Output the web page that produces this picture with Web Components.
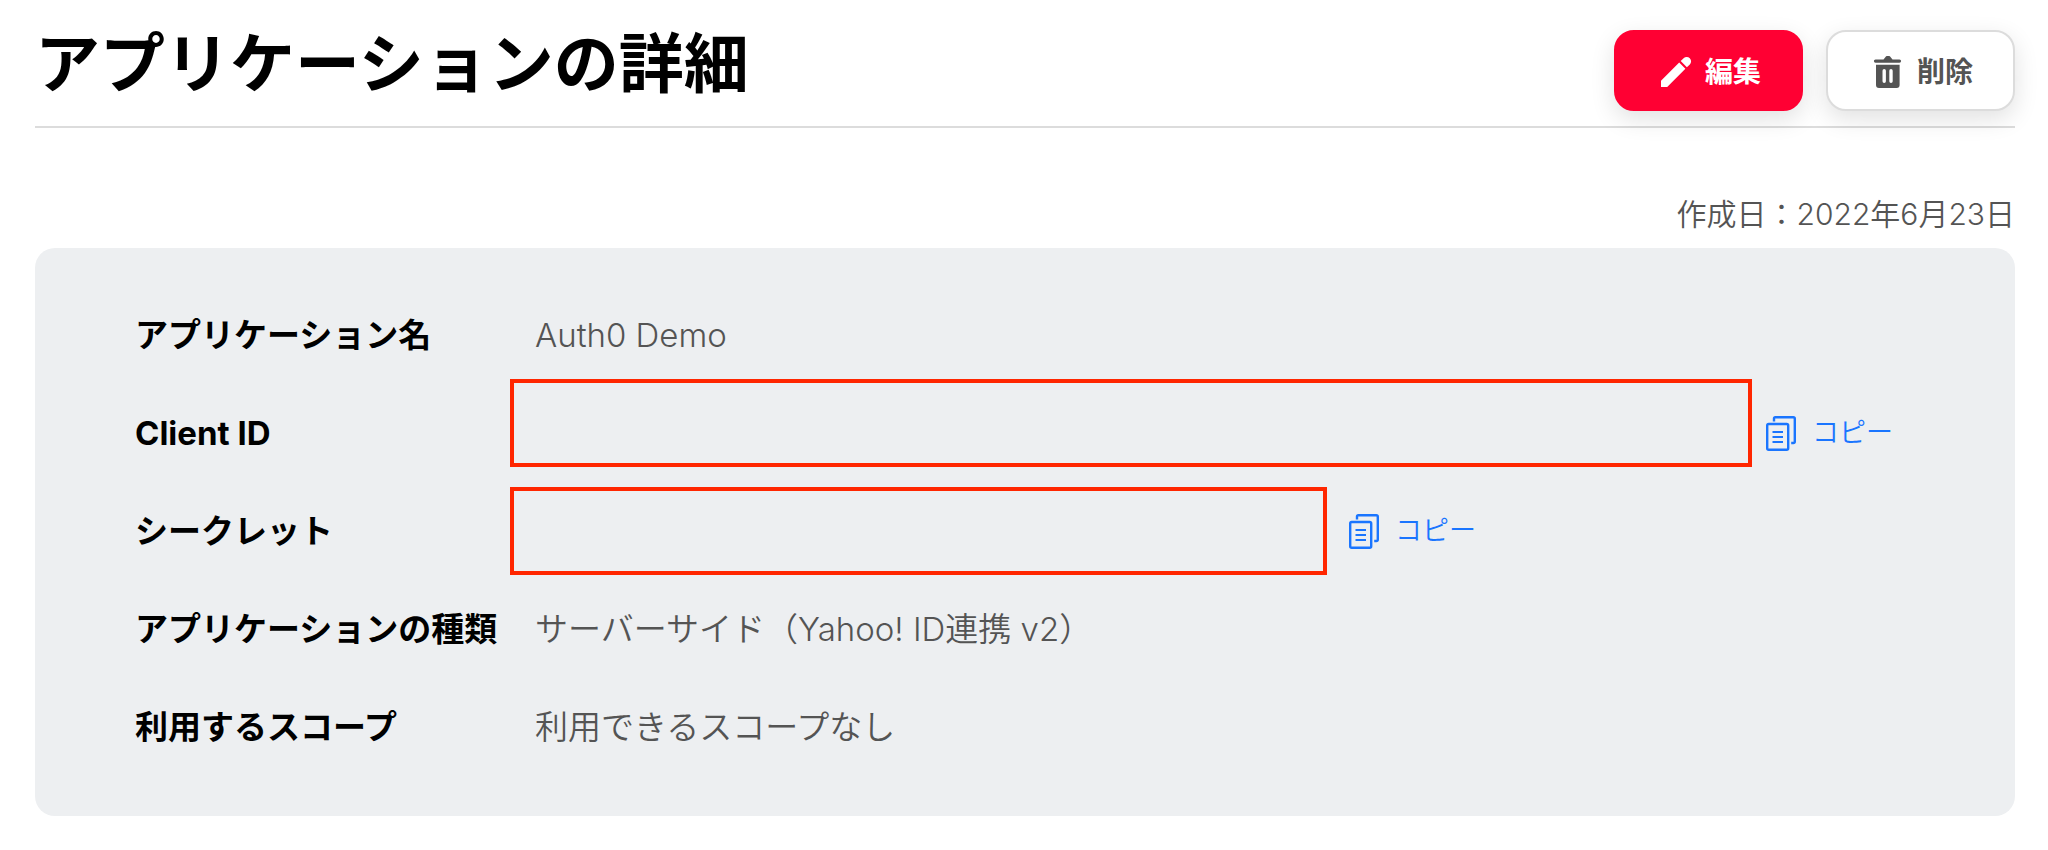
<!DOCTYPE html>
<html lang="ja">
<head>
<meta charset="utf-8">
<title>アプリケーションの詳細</title>
<style>
  body { margin: 0; background: #fff; color: #000; font-family: Inter, "Noto Sans CJK JP", sans-serif; }
</style>
</head>
<body>
<app-page>
  <page-header heading="アプリケーションの詳細">
    <action-button kind="primary" icon="edit">編集</action-button>
    <action-button icon="trash">削除</action-button>
  </page-header>
  <created-date>作成日：2022年6月23日</created-date>
  <detail-panel>
    <detail-row label="アプリケーション名">Auth0 Demo</detail-row>
    <detail-row label="Client ID"><masked-value size="wide"></masked-value></detail-row>
    <detail-row label="シークレット"><masked-value></masked-value></detail-row>
    <detail-row label="アプリケーションの種類">サーバーサイド（Yahoo! ID連携 v2）</detail-row>
    <detail-row label="利用するスコープ">利用できるスコープなし</detail-row>
  </detail-panel>
</app-page>
<script>
const ICONS = {
  edit: `<svg viewBox="0 0 40 40" width="40" height="40" fill="currentColor" aria-hidden="true"><path d="M5 28.8 23.2 10.600 29.400 16.800 11.200 35H5zM24.700 9.100l2.900-2.900a4.300 4.300 0 0 1 6.200 6.200l-2.900 2.900z"/></svg>`,
  trash: `<svg viewBox="0 0 40 40" width="40" height="40" fill="currentColor" aria-hidden="true"><path fill-rule="evenodd" d="M7.500 7.500H15.500L17.500 5Q18 4 19 4H21Q22 4 22.500 5L24.500 7.500H31.500a1.600 1.600 0 0 1 0 3.200H7.500a1.600 1.600 0 0 1 0-3.200zM8 12.700H31.600V33Q31.600 36 28.600 36H11Q8 36 8 33zM16.200 17Q14.500 17 14.500 18.700V29.300Q14.500 31 16.200 31T17.900 29.300V18.700Q17.900 17 16.200 17zM23 17Q21.300 17 21.300 18.700V29.300Q21.300 31 23 31T24.700 29.300V18.700Q24.700 17 23 17z"/></svg>`,
  copy: `<svg viewBox="0 0 30 35" width="30" height="35" fill="none" stroke="currentColor" stroke-width="2.400" aria-hidden="true"><rect x="1.200" y="8" width="21" height="25.800" rx="1.500"/><path d="M8 5.500V2.500Q8 1.200 9.300 1.200H27.300Q28.800 1.200 28.800 2.700V25.500Q28.800 27 27.300 27H25.200"/><path stroke-width="2" d="M6.500 16h10.500M6.500 21h10.500M6.500 26h10.500"/></svg>`
};
class Base extends HTMLElement {
  connectedCallback() {
    if (!this.shadowRoot) this.attachShadow({ mode: "open" }).innerHTML = this.view();
  }
}
customElements.define("app-page", class extends Base {
  view() { return `<style>
    :host { display: block; padding: 0 33px 34px 35px; }
  </style><main><slot></slot></main>`; }
});
customElements.define("page-header", class extends Base {
  view() { return `<style>
    :host { display: block; }
    header { display: flex; justify-content: space-between; align-items: flex-start; gap: 24px; padding-bottom: 14px; border-bottom: 2px solid #dcdcdc; }
    h1 { margin: 16px 0 0; font-size: 65px; line-height: 96px; font-weight: 700; }
    .actions { display: flex; gap: 23px; padding-top: 30px; }
  </style><header><h1>${this.getAttribute("heading")}</h1><div class="actions"><slot></slot></div></header>`; }
});
customElements.define("action-button", class extends Base {
  view() { return `<style>
    :host { display: block; }
    button { display: flex; align-items: center; gap: 9px; box-sizing: border-box; height: 81px; padding: 2px 40px 0; border: 2px solid #dcdcdc; border-radius: 20px; background: #fff; color: #545454; font: inherit; font-size: 28px; line-height: 40px; font-weight: 700; white-space: nowrap; box-shadow: 0 8px 24px rgba(0, 0, 0, .12); }
    button.primary { border-color: #ff0033; background: #ff0033; color: #fff; }
    svg { flex: none; }
  </style><button type="button" class="${this.getAttribute("kind") || ""}">${ICONS[this.getAttribute("icon")]}<span><slot></slot></span></button>`; }
});
customElements.define("created-date", class extends Base {
  view() { return `<style>
    :host { display: block; padding: 66px 0 14px; text-align: right; color: #545454; font-size: 30px; line-height: 40px; font-weight: 350; }
  </style><slot></slot>`; }
});
customElements.define("detail-panel", class extends Base {
  view() { return `<style>
    :host { display: block; padding: 38px 0 40px; border-radius: 20px; background: #edeff1; }
  </style><slot></slot>`; }
});
customElements.define("detail-row", class extends Base {
  view() { return `<style>
    :host { display: block; }
    dl { display: grid; grid-template-columns: 400px minmax(0, 1fr); align-items: center; min-height: 98px; margin: 0; padding-left: 100px; font-size: 33px; line-height: 48px; }
    dt { font-weight: 700; white-space: nowrap; }
    dd { margin: 0; color: #545454; font-weight: 350; }
  </style><dl><dt>${this.getAttribute("label")}</dt><dd><slot></slot></dd></dl>`; }
});
customElements.define("copy-button", class extends Base {
  view() { return `<style>
    :host { display: block; flex: none; }
    button { display: flex; align-items: center; gap: 16px; padding: 0; border: 0; background: none; color: #1a75ff; font: inherit; font-size: 27px; line-height: 40px; white-space: nowrap; }
  </style><button type="button">${ICONS.copy}<span><slot></slot></span></button>`; }
});
customElements.define("masked-value", class extends Base {
  view() { return `<style>
    :host { display: flex; align-items: center; gap: 22px; margin-left: -25px; }
    .mask { flex: 0 1 817px; box-sizing: border-box; height: 88px; border: 4px solid #ff2600; }
    :host([size="wide"]) { gap: 14px; }
    :host([size="wide"]) .mask { flex-basis: 1242px; margin: -10px 0 10px; }
  </style><div class="mask"></div><copy-button>コピー</copy-button>`; }
});
</script>
</body>
</html>
